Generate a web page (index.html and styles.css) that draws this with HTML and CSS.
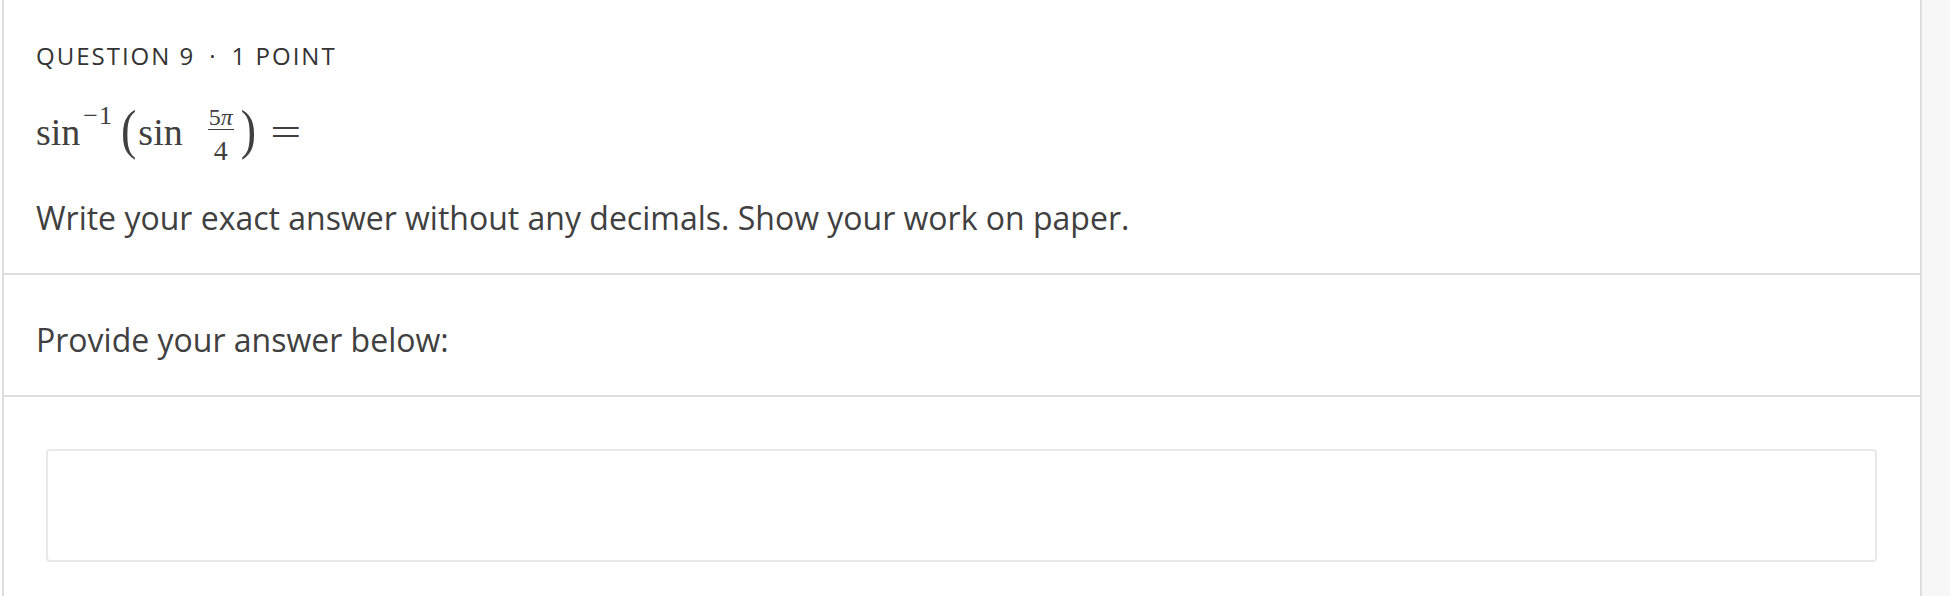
FILE: index.html
```html
<!DOCTYPE html>
<html lang="en">
<head>
  <meta charset="UTF-8">
  <meta name="viewport" content="width=device-width, initial-scale=1.0">
  <title>Question 9</title>
  <link rel="stylesheet" href="styles.css">
</head>
<body>
  <div class="page">
    <main class="card">
      <section class="question">
        <div class="label">QUESTION 9<span class="dot">&middot;</span>1 POINT</div>
        <div class="math"><span class="fn">sin</span><sup class="inv">&minus;1</sup><span class="paren">(</span><span class="fn fn-inner">sin</span><span class="frac"><span class="num">5<i>&pi;</i></span><span class="den">4</span></span><span class="paren paren-close">)</span><span class="eq">=</span></div>
        <p class="prompt">Write your exact answer without any decimals. Show your work on paper.</p>
      </section>
      <section class="answer-head">
        <p>Provide your answer below:</p>
      </section>
      <section class="answer">
        <div class="answer-box"></div>
      </section>
    </main>
    <aside class="side"></aside>
  </div>
</body>
</html>
```

FILE: styles.css
```css
body {
  margin: 0;
  font-family: "Open Sans", Arial, sans-serif;
  color: #404040;
  background-color: #fff;
}
.page {
  display: flex;
  height: 596px;
  overflow: hidden;
}
.card {
  flex: 1;
  margin-left: 2px;
  border-left: 2px solid #ddd;
  border-right: 2px solid #ddd;
}
.side {
  width: 28px;
  background-color: #f7f7f7; /* grey strip on the right */
}

/* question block */
.question {
  padding: 40px 32px 0 32px;
  height: 233px;
  border-bottom: 2px solid #ddd;
}
.label {
  font-size: 24px;
  line-height: 32px;
  letter-spacing: 2px;
  color: #333;
}
.label .dot {
  margin: 0 14px;
}
.math {
  margin-top: 40px;
  height: 40px;
  font-family: "Liberation Serif", "Times New Roman", serif;
  font-size: 38px;
  line-height: 40px;
  white-space: nowrap;
}
.inv {
  font-size: 26px;
  line-height: 0;
  letter-spacing: 1px;
  vertical-align: 21px;
  margin-left: 3px;
}
.paren {
  display: inline-block;
  font-size: 46px;
  line-height: 46px;
  margin: -10px 0 -10px 8px;
  transform: scale(1, 1.2);
}
.paren-close {
  margin-left: 7px;
}
.fn-inner {
  margin-left: 2px;
}
.frac {
  display: inline-flex;
  flex-direction: column;
  align-items: center;
  vertical-align: 20px;
  margin: -20px 0 -25px 25px;
}
.num {
  font-size: 24px;
  line-height: 24px;
  padding: 0 1px;
  border-bottom: 1px solid #404040;
}
.den {
  font-size: 28px;
  line-height: 28px;
  padding-top: 7px;
}
.eq {
  display: inline-block;
  margin-left: 19px;
  transform: scaleX(1.45);
}
.prompt {
  margin: 46px 0 0;
  font-size: 32px;
  line-height: 40px;
}

/* answer area */
.answer-head {
  padding: 45px 32px 0;
  height: 75px;
  border-bottom: 2px solid #ddd;
}
.answer-head p {
  margin: 0;
  font-size: 32px;
  line-height: 40px;
}
.answer {
  padding: 52px 43px 0 42px;
}
.answer-box {
  height: 109px;
  border: 2px solid #e8e8e8;
  border-radius: 4px;
}
```
